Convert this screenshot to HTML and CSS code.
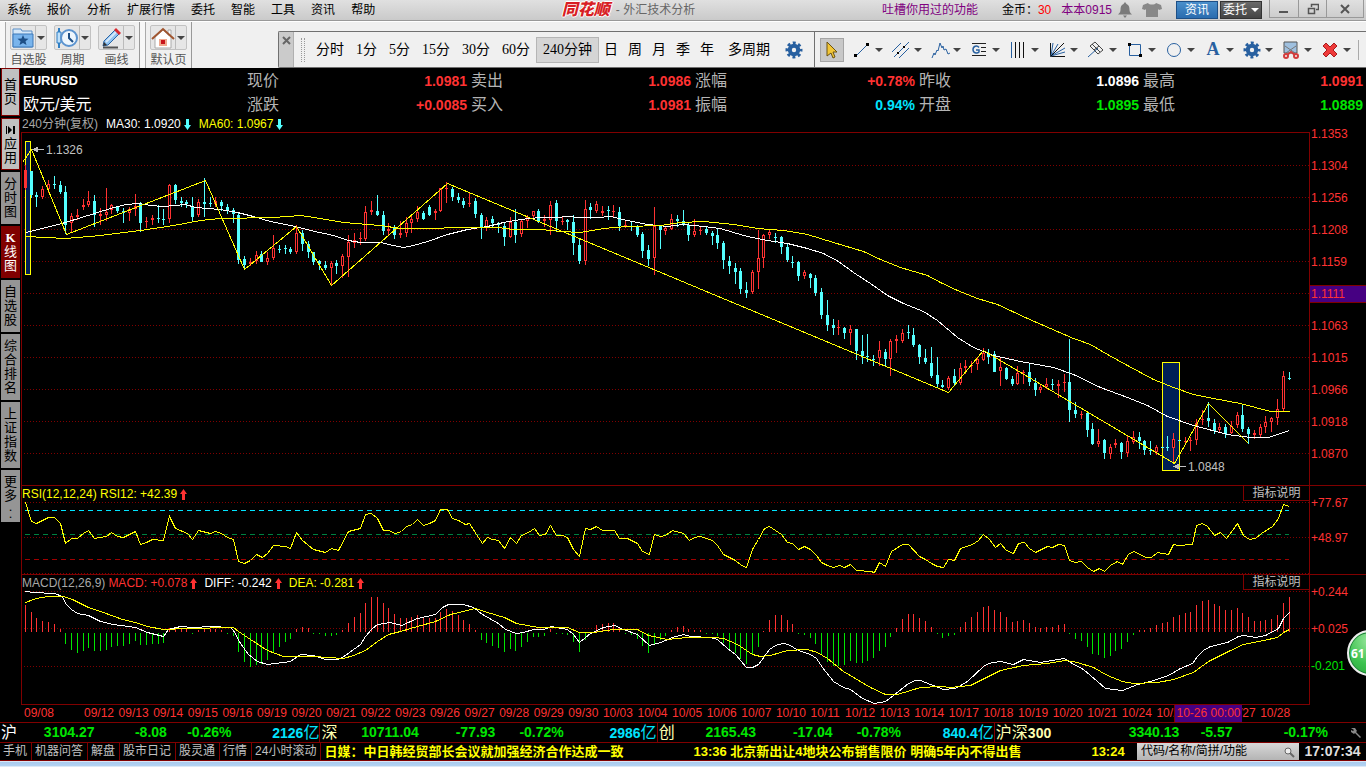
FILE: index.html
```html
<!DOCTYPE html>
<html lang="zh-CN">
<head>
  <meta charset="UTF-8" />
  <meta name="viewport" content="width=device-width, initial-scale=1.0"/>
  <title>同花顺 - 外汇技术分析</title>
  <link rel="stylesheet" href="styles.css">
</head>
<body>
  <header class="titlebar">
    <nav class="menu">
      <button>系统</button>
      <button>报价</button>
      <button>分析</button>
      <button>扩展行情</button>
      <button>委托</button>
      <button>智能</button>
      <button>工具</button>
      <button>资讯</button>
      <button>帮助</button>
    </nav>
    <h1 class="title"><span class="logo">同花顺</span> - 外汇技术分析</h1>
    <div class="account">
      <a href="#" class="feedback">吐槽你用过的功能</a>
      <span class="coins">金币：<b>30</b></span>
      <a href="#">本本0915</a>
      <svg class="bell" width="14" height="16" viewBox="0 0 14 16"><path d="M7 0l1.500 2c2.500 1 3 3 3 6 0 2 1 3 2.500 4.500H0C1.500 11 2.500 10 2.500 8c0-3 .5-5 3-6zM5 13.500h4L7 16z" fill="#7b7b7b"/></svg>
      <svg class="shirt" width="20" height="16" viewBox="0 0 20 16"><path d="M6 1c1 2 7 2 8 0l5 2 1 4-3 1-1-1v8H4V7L3 8 0 7l1-4z" fill="#888"/></svg>
    </div>
    <div class="quick">
      <button class="blue">资讯</button>
      <button class="dark">委托 <i class="arrow light"></i></button>
    </div>
    <div class="window-buttons">
      <button aria-label="最小化"><svg width="12" height="12" viewBox="0 0 12 12"><path d="M1 8h9v2H1z" fill="#555"/></svg></button>
      <button aria-label="还原"><svg width="12" height="12" viewBox="0 0 12 12"><path d="M4.500 4V1.500h7v5H9M1.500 5.500h6v5h-6z" fill="none" stroke="#555" stroke-width="1.500"/></svg></button>
      <button aria-label="关闭"><svg width="12" height="12" viewBox="0 0 12 12"><path d="M2 2l8 8M10 2l-8 8" stroke="#555" stroke-width="2"/></svg></button>
    </div>
  </header>

  <div class="toolbar">
    <div class="group">
      <div class="tool">
        <button aria-label="自选股">
          <svg width="24" height="22" viewBox="0 0 24 22"><path d="M2 4V2h8l1 2h10v16H2z" fill="#d6e8f8" stroke="#5b8fc7"/><path d="M2 7h20v13H2z" fill="#79b4ec" stroke="#3d79b8"/><path d="M12 8l1.500 3.500 4 .3-3 2.500 1 3.700-3.500-2-3.500 2 1-3.700-3-2.500 4-.3z" fill="#1d4f86"/></svg>
          <i class="arrow"></i>
        </button>
        <span>自选股</span>
      </div>
      <div class="tool">
        <button aria-label="周期">
          <svg width="24" height="22" viewBox="0 0 24 22"><path d="M4 1v20" stroke="#2f7fc4" stroke-width="2"/><path d="M2 5h4v11H2z" fill="#bfe0fa" stroke="#2f7fc4"/><circle cx="14" cy="11" r="8" fill="#eef6fd" stroke="#5b93cf" stroke-width="2"/><path d="M14 6v5l4 4" fill="none" stroke="#1d4f86" stroke-width="2"/></svg>
          <i class="arrow"></i>
        </button>
        <span>周期</span>
      </div>
      <div class="tool">
        <button aria-label="画线">
          <svg width="24" height="22" viewBox="0 0 24 22"><path d="M4 20.500h15" stroke="#555" stroke-width="2"/><path d="M4 19l1-5L16 3l4 4L9 18z" fill="#8fc2f0" stroke="#2b65a5"/><path d="M7 15L17 5" stroke="#d6e8f8" stroke-width="2"/><path d="M15 3l2-2 5 5-2 2z" fill="#d9272e"/><path d="M4 19l1-4 3 3z" fill="#333"/></svg>
          <i class="arrow"></i>
        </button>
        <span>画线</span>
      </div>
    </div>
    <div class="group">
      <div class="tool">
        <button aria-label="默认页">
          <svg width="24" height="22" viewBox="0 0 24 22"><path d="M17 3h3v5h-3zM4 10l8-7 8 7v11H4z" fill="#fff" stroke="#aaa"/><path d="M1 12L12 2l11 10" fill="none" stroke="#a0552f" stroke-width="2"/><path d="M8 12h8v7H8z" fill="#f0a98f"/><path d="M10 13h4v4h-4z" fill="#c8141b"/></svg>
          <i class="arrow"></i>
        </button>
        <span>默认页</span>
      </div>
    </div>

    <div class="dock">
      <button class="dock-close" aria-label="关闭工具条"><svg width="9" height="9" viewBox="0 0 9 9"><path d="M1 1l7 7M8 1L1 8" stroke="#666" stroke-width="2"/></svg></button>
      <div class="grip"></div>
      <div class="periods">
        <button>分时</button>
        <button>1分</button>
        <button>5分</button>
        <button>15分</button>
        <button>30分</button>
        <button>60分</button>
        <button class="active">240分钟</button>
        <button class="short">日</button>
        <button class="short">周</button>
        <button class="short">月</button>
        <button class="short">季</button>
        <button class="short">年</button>
        <button class="multi">多周期</button>
      </div>
      <button class="gear" aria-label="设置"><svg width="18" height="18"><use href="#icon-gear"/></svg></button>
      <div class="draw-tools">
        <button class="pointer" aria-label="选择"><svg width="12" height="18" viewBox="0 0 12 18"><path d="M1 1l10 10H7l2 5-2 1-2-5-4 3z" fill="#f2c637" stroke="#6b5312"/></svg></button>
        <button class="draw" aria-label="线段"><svg width="20" height="20" viewBox="0 0 20 20"><path d="M4 16L16 4" stroke="#2860a0"/><path d="M2 14h3v3H2zM14 3h3v3h-3z"/></svg><i class="arrow"></i></button>
        <button class="draw" aria-label="平行线"><svg width="20" height="20" viewBox="0 0 20 20"><path d="M1 12L10 3M3 17L18 2M8 18L18 8" stroke="#2860a0"/><path d="M6 12h2v2H6zM12 6h2v2h-2z"/></svg><i class="arrow"></i></button>
        <button class="draw" aria-label="波浪线"><svg width="20" height="20" viewBox="0 0 20 20"><path d="M2 18l2-5 1 2 2-5 1 1 2-8 2 5 1-2 1 4 2-1 2 5 2-1" fill="none" stroke="#2860a0"/></svg><i class="arrow"></i></button>
        <button class="draw" aria-label="黄金分割"><svg width="20" height="20" viewBox="0 0 20 20"><path d="M3 3.500h14M12 7.500h5M12 11.500h5M3 15.500h14" stroke="#222"/><path d="M10 7.500C8 5 4 6 4 9.500s4 4.500 6 2.500V10H7" fill="none" stroke="#2860a0" stroke-width="1.500"/></svg><i class="arrow"></i></button>
        <button class="draw" aria-label="周期线"><svg width="20" height="20" viewBox="0 0 20 20"><path d="M3.500 2v16" stroke="#2860a0"/><path d="M7.500 2v16M11.500 2v16M15.500 2v16" stroke="#111"/></svg><i class="arrow"></i></button>
        <button class="draw" aria-label="速阻线"><svg width="20" height="20" viewBox="0 0 20 20"><path d="M3.500 3v13.500H18" fill="none" stroke="#111"/><path d="M4 16L6 3M4 16L11 4M4 16L18 8M4 16l14-4" stroke="#2860a0"/><path d="M4 16L17 3" stroke="#111"/></svg><i class="arrow"></i></button>
        <button class="draw" aria-label="音叉线"><svg width="20" height="20" viewBox="0 0 20 20"><path d="M2 17L12 8" stroke="#2860a0"/><path d="M4 6l8 8M6 4l8 8M9 2l8 8M4 6l5-4M8 10l5-4M12 14l5-4" stroke="#444"/></svg><i class="arrow"></i></button>
        <button class="draw" aria-label="矩形"><svg width="20" height="20" viewBox="0 0 20 20"><path d="M4.500 4.500h11v11h-11z" fill="none" stroke="#2860a0"/><path d="M3 3h3v3H3zM14 14h3v3h-3z"/></svg><i class="arrow"></i></button>
        <button class="draw" aria-label="圆"><svg width="20" height="20" viewBox="0 0 20 20"><circle cx="10" cy="10" r="6.500" fill="none" stroke="#2860a0"/></svg><i class="arrow"></i></button>
        <button class="draw" aria-label="文字"><span class="letter">A</span><i class="arrow"></i></button>
        <button class="draw" aria-label="画线设置"><svg width="20" height="20" viewBox="-1 -1 20 20"><use href="#icon-gear" width="18" height="18"/></svg><i class="arrow"></i></button>
        <button class="draw" aria-label="截图"><svg width="20" height="20" viewBox="0 0 20 20"><path d="M3 2h13v11H3z" fill="#9fc0df" stroke="#555"/><path d="M4 6l10 7M15 6L5 13" stroke="#777"/><path d="M6 15l4-3 4 3" fill="none" stroke="#d33c3c" stroke-width="2"/><circle cx="5" cy="16" r="2" fill="none" stroke="#d33c3c" stroke-width="2"/><circle cx="15" cy="16" r="2" fill="none" stroke="#d33c3c" stroke-width="2"/></svg><i class="arrow"></i></button>
        <button class="draw" aria-label="删除画线"><svg width="20" height="20" viewBox="0 0 20 20"><path d="M3 6l3-3 4 4 4-4 3 3-4 4 4 4-3 3-4-4-4 4-3-3 4-4z" fill="#ee3a3a" stroke="#a81c1c"/></svg><i class="arrow"></i></button>
      </div>
    </div>
  </div>

  <div class="workspace">
    <nav class="sidebar">
      <button class="bright tall">首页</button>
      <button class="bright"><svg width="10" height="12" viewBox="0 0 10 12"><path d="M2 2l4 4-4 4zM7 2h2v8H7zM0 2h1v8H0z"/></svg>应用</button>
      <button>分时图</button>
      <button class="selected"><b>K</b>线图</button>
      <button>自选股</button>
      <button>综合排名</button>
      <button>上证指数</button>
      <button>更多<span class="dots">. .</span></button>
    </nav>

    <main class="content">
      <section class="quote">
        <div class="name"><b>EURUSD</b></div>
        <div>现价<b class="up">1.0981</b></div>
        <div>卖出<b class="up">1.0986</b></div>
        <div>涨幅<b class="up">+0.78%</b></div>
        <div>昨收<b class="flat">1.0896</b></div>
        <div>最高<b class="up">1.0991</b></div>
        <div class="name">欧元/美元</div>
        <div>涨跌<b class="up">+0.0085</b></div>
        <div>买入<b class="up">1.0981</b></div>
        <div>振幅<b class="cyan">0.94%</b></div>
        <div>开盘<b class="down">1.0895</b></div>
        <div>最低<b class="down">1.0889</b></div>
      </section>

      <div class="legend">
        <span class="muted">240分钟(复权)</span>
        <span class="white">MA30: 1.0920<svg class="mark" width="7" height="11"><use href="#icon-down"/></svg></span>
        <span class="yellow">MA60: 1.0967<svg class="mark" width="7" height="11"><use href="#icon-down"/></svg></span>
      </div>

      <section class="panel">
        <div class="plot">
          <svg id="price" class="chart price" viewBox="22 133 1287 352" preserveAspectRatio="none"></svg>
        </div>
        <ul class="axis price-axis">
          <li>1.1353</li>
          <li>1.1304</li>
          <li>1.1256</li>
          <li>1.1208</li>
          <li>1.1159</li>
          <li><span class="cursor">1.1111</span></li>
          <li>1.1063</li>
          <li>1.1015</li>
          <li>1.0966</li>
          <li>1.0918</li>
          <li>1.0870</li>
        </ul>
      </section>

      <section class="panel">
        <div class="plot">
          <div class="legend">
            <span class="yellow">RSI(12,12,24) RSI12: +42.39<svg class="mark" width="7" height="11"><use href="#icon-up"/></svg></span>
            <button class="help">指标说明</button>
          </div>
          <svg id="rsi" class="chart rsi" viewBox="22 502 1287 72" preserveAspectRatio="none"></svg>
        </div>
        <ul class="axis rsi-axis">
          <li>+77.67</li>
          <li>+48.97</li>
        </ul>
      </section>

      <section class="panel last">
        <div class="plot">
          <div class="legend">
            <span class="muted">MACD(12,26,9)</span>
            <span class="red">MACD: +0.078<svg class="mark" width="7" height="11"><use href="#icon-up"/></svg></span>
            <span class="white">DIFF: -0.242<svg class="mark" width="7" height="11"><use href="#icon-up"/></svg></span>
            <span class="yellow">DEA: -0.281<svg class="mark" width="7" height="11"><use href="#icon-up"/></svg></span>
            <button class="help">指标说明</button>
          </div>
          <svg id="macd" class="chart macd" viewBox="22 591 1287 113" preserveAspectRatio="none"></svg>
        </div>
        <ul class="axis macd-axis">
          <li>+0.244</li>
          <li>+0.025</li>
          <li class="down">-0.201</li>
        </ul>
        <button class="badge">61</button>
      </section>

      <div class="dates">
        <ol id="dates"></ol>
        <span class="cursor-date">10-26 00:00</span>
      </div>
    </main>
  </div>

  <section class="indices">
    <div class="index"><span>沪</span><b>3104.27</b><b>-8.08</b><b>-0.26%</b><b class="cyan">2126<i>亿</i></b></div>
    <div class="index"><span class="pale">深</span><b>10711.04</b><b>-77.93</b><b>-0.72%</b><b class="cyan">2986<i>亿</i></b></div>
    <div class="index"><span class="pale">创</span><b>2165.43</b><b>-17.04</b><b>-0.78%</b><b class="cyan">840.4<i>亿</i></b></div>
    <div class="index wide"><span class="pale">沪深<strong>300</strong></span><b>3340.13</b><b>-5.57</b><b>-0.17%</b></div>
    <button class="wrench" aria-label="设置"><svg width="12" height="12" viewBox="0 0 12 12"><path d="M1 1l4 0 2 3-1 1 5 5-1 1-5-5-1 1-3-2 0-2 2 1 1-1z" fill="#888"/></svg></button>
  </section>

  <footer class="status">
    <nav class="links">
      <a href="#">手机</a><a href="#">机器问答</a><a href="#">解盘</a><a href="#">股市日记</a><a href="#">股灵通</a><a href="#">行情</a><a href="#">24小时滚动</a>
    </nav>
    <div class="news">
      <span>日媒：中日韩经贸部长会议就加强经济合作达成一致</span>
      <span>13:36 北京新出让4地块公布销售限价 明确5年内不得出售</span>
      <span>13:24</span>
    </div>
    <div class="search">
      <input type="text" placeholder="代码/名称/简拼/功能" aria-label="代码/名称/简拼/功能">
      <svg width="12" height="12" viewBox="0 0 12 12"><circle cx="5" cy="5" r="3" fill="#eee" stroke="#666"/><path d="M7 7l4 4" stroke="#666" stroke-width="2"/></svg>
    </div>
    <time>17:07:34</time>
  </footer>
  <div class="desktop-edge"></div>

  <svg class="defs" width="0" height="0">
    <symbol id="icon-gear" viewBox="0 0 18 18">
      <circle cx="9" cy="9" r="7" fill="none" stroke="#2860a0" stroke-width="3" stroke-dasharray="2.900 2.600" stroke-dashoffset="1.450"/>
      <circle cx="9" cy="9" r="4.200" fill="none" stroke="#2860a0" stroke-width="4"/>
    </symbol>
    <symbol id="icon-down" viewBox="0 0 7 11"><path d="M2 0h3v6h2L3.500 11 0 6h2z" fill="#54ffff"/></symbol>
    <symbol id="icon-up" viewBox="0 0 7 11"><path d="M2 11h3V5h2L3.500 0 0 5h2z" fill="#ff3232"/></symbol>
  </svg>
  <script src="charts.js"></script>
</body>
</html>
```

FILE: styles.css
```css
* {
  box-sizing: border-box;
}

body {
  margin: 0;
  min-height: 100vh;
  background: #000;
  font-family: "Liberation Sans", "Noto Sans CJK SC", sans-serif;
  font-size: 12px;
  line-height: 16px;
  overflow-x: hidden;
}

button {
  margin: 0;
  padding: 0;
  border: none;
  background: none;
  color: inherit;
  font: inherit;
  cursor: pointer;
}

ul, ol {
  margin: 0;
  padding: 0;
  list-style: none;
}

a {
  color: inherit;
  text-decoration: none;
}

svg {
  display: block;
  flex: none;
}

.defs {
  position: absolute;
}

.arrow {
  border: 4px solid transparent;
  border-top-color: #444;
  border-bottom: none;
}

.arrow.light {
  border-top-color: #fff;
}

.up, .red { color: #ff3232; }
.down { color: #00e600; }
.cyan { color: #00e4ff; }
.flat, .white { color: #fff; }
.yellow { color: #ff0; }
.muted { color: #a8a8a8; }

/* title bar */
.titlebar {
  display: flex;
  align-items: center;
  height: 21px;
  background: linear-gradient(#e0e0e0, #cacaca);
  border-bottom: 1px solid #999;
  white-space: nowrap;
}

.menu {
  display: flex;
  gap: 16px;
  padding-left: 7px;
}

.title {
  display: flex;
  align-items: center;
  gap: 6px;
  margin: 0 auto;
  color: #666;
  font-size: 12px;
  font-weight: normal;
}

.logo {
  color: #d81e24;
  font-size: 16px;
  font-weight: 900;
  font-style: italic;
  text-shadow: 1px 0 #fff, -1px 0 #fff, 0 1px #fff, 0 -1px #fff;
}

.account {
  display: flex;
  align-items: center;
  color: #800080;
}

.coins {
  margin: 0 10px 0 24px;
  color: #000;
}

.coins b {
  color: #f00;
  font-weight: normal;
}

.bell {
  margin: 0 10px 0 6px;
}

.quick {
  display: flex;
  gap: 2px;
  margin: 0 7px 0 14px;
}

.quick button {
  display: flex;
  align-items: center;
  justify-content: center;
  gap: 4px;
  width: 42px;
  height: 18px;
  color: #fff;
}

.quick .blue {
  background: linear-gradient(#4a8fcb, #2a6caf);
  border: 1px solid #1d4f86;
}

.quick .dark {
  background: linear-gradient(#6a6a6a, #444);
  border: 1px solid #333;
}

.window-buttons {
  display: flex;
  align-self: flex-start;
  margin-right: 2px;
  border: 1px solid #999;
  border-top: none;
}

.window-buttons button {
  display: flex;
  align-items: center;
  justify-content: center;
  width: 28px;
  height: 17px;
}

.window-buttons button + button {
  border-left: 1px solid #999;
}

.window-buttons button:last-child {
  width: 37px;
}

/* toolbar */
.toolbar {
  display: flex;
  height: 47px;
  background: #f0f0f0;
  border-top: 1px solid #fff;
}

.group {
  display: flex;
  gap: 7px;
  padding: 3px 4px 0 10px;
  border-right: 1px solid #999;
  box-shadow: inset 5px 0 #f7f7f7, inset 6px 0 #aaa;
}

.tool {
  display: flex;
  flex-direction: column;
  align-items: center;
  color: #555;
}

.tool button {
  display: flex;
  align-items: center;
  gap: 2px;
  height: 25px;
  padding: 0 1px 0 0;
  background: linear-gradient(90deg, #e6e6e6 24px, #bbb 24px, #bbb 25px, #e6e6e6 25px);
  border: 1px solid #c2c2c2;
  border-radius: 2px;
}

.tool span {
  padding-top: 2px;
}

.dock {
  display: flex;
  flex: 1;
  margin: 9px 0 0 86px;
  border: 1px solid #707070;
  border-right: none;
  border-radius: 2px 0 0 2px;
  align-items: center;
}

.dock-close {
  align-self: stretch;
  display: flex;
  justify-content: center;
  width: 15px;
  padding-top: 4px;
  background: #cbcbcb;
  border-right: 1px solid #b0b0b0;
}

.grip {
  width: 4px;
  height: 24px;
  margin: 0 5px 0 7px;
  border: 1px dotted #999;
  border-width: 0 1px;
}

.periods {
  display: flex;
  font-family: "Liberation Serif", "Noto Sans CJK SC", serif;
  font-size: 14px;
}

.periods button {
  height: 26px;
  padding: 0 5px;
  border: 1px solid transparent;
  white-space: nowrap;
}

.periods .active {
  padding: 0 6px;
  background: #d5d5d5;
  border-color: #b5b5b5;
}

.periods .short {
  padding: 0 4px;
}

.periods .multi {
  padding: 0 8px;
}

.gear {
  margin: 0 11px 0 6px;
}

.draw-tools {
  display: flex;
  flex: 1;
  align-items: center;
  align-self: stretch;
  padding-left: 5px;
  border-left: 1px solid #707070;
}

.pointer {
  display: flex;
  align-items: center;
  justify-content: center;
  width: 24px;
  height: 24px;
  margin-right: 8px;
  background: #c8c8c8;
  border: 1px solid #a5a5a5;
}

.draw {
  display: flex;
  align-items: center;
  gap: 3px;
  width: 39px;
}

.draw:last-child {
  border-right: 1px solid #aaa;
}

.letter {
  width: 20px;
  color: #2860a0;
  font: bold 18px "Liberation Serif", serif;
}

/* left tabs */
.workspace {
  display: flex;
}

.sidebar {
  display: flex;
  flex-direction: column;
  gap: 2px;
  width: 21px;
  padding-left: 1px;
}

.sidebar button {
  width: 19px;
  padding: 5px 3px;
  background: #959595;
  color: #000;
  font-size: 13px;
  line-height: 14px;
  word-break: break-all;
}

.sidebar .bright {
  padding: 4px 2px;
  background: #c0c0c0;
  border: 1px solid #800000;
}

.sidebar .tall {
  padding: 9px 2px;
}

.sidebar .selected {
  background: #800000;
  color: #fff;
}

.sidebar b {
  display: block;
  font-family: "Liberation Serif", serif;
}

.sidebar svg {
  height: 14px;
  margin: 0 auto;
}

.dots {
  display: block;
  width: 4px;
  margin: 0 auto;
  line-height: 7px;
}

/* quote header */
.content {
  flex: 1;
  min-width: 0;
}

.quote {
  display: grid;
  grid-template-columns: repeat(6, 1fr);
  padding: 1px 0 0 1px;
  color: #b4b4b4;
  font-size: 16px;
  line-height: 24px;
}

.quote div {
  display: flex;
  justify-content: space-between;
  padding: 0 3px 0 1px;
}

.quote b {
  font-size: 14px;
}

.quote .name {
  color: #fff;
}

.quote .name b {
  font-size: 13px;
}

.legend {
  display: flex;
  gap: 8px;
  height: 15px;
  padding-left: 1px;
  line-height: 15px;
  white-space: nowrap;
}

.legend .mark {
  display: inline-block;
  margin-left: 3px;
  vertical-align: -2px;
}

/* charts */
.panel {
  display: flex;
  position: relative;
}

.plot {
  flex: 1;
  min-width: 0;
  border-top: 1px solid #800000;
  border-left: 1px solid #800000;
}

.plot .legend {
  gap: 3px;
  height: 16px;
  padding-left: 0;
  line-height: 17px;
}

.plot .white, .plot .white + .yellow {
  margin-left: 4px;
}

.last .plot {
  border-bottom: 1px solid #800000;
}

.help {
  width: 66px;
  height: 15px;
  margin-left: auto;
  border: 1px solid #800000;
  border-width: 0 0 1px 1px;
  color: #c0c0c0;
  line-height: 14px;
}

.chart {
  width: 100%;
  overflow: hidden;
  shape-rendering: crispEdges;
}

.price { height: 352px; }
.rsi { height: 72px; }
.macd { height: 113px; }

.grid-line {
  stroke: #800000;
  stroke-dasharray: 1 2;
}

.level {
  stroke-dasharray: 5 4;
}

.line {
  fill: none;
  stroke-width: 1;
}

.note {
  fill: #c0c0c0;
  font-size: 12px;
}

.axis {
  display: flex;
  flex-direction: column;
  width: 57px;
  border-top: 1px solid #800000;
  border-left: 1px solid #800000;
  color: #ff3232;
  line-height: 14px;
}

.axis li {
  padding-left: 1px;
}

.price-axis {
  border-top: none;
}

.price-axis li {
  display: flex;
  flex-direction: column;
  justify-content: center;
  height: 32px;
  padding: 0;
  text-indent: 1px;
}

.price-axis li:first-child {
  margin-top: -14px;
}

.cursor {
  height: 18px;
  background: #460082;
  border: 1px solid #800000;
  border-width: 1px 0;
  line-height: 16px;
}

.rsi-axis {
  gap: 21px;
  padding-top: 10px;
}

.macd-axis {
  gap: 23px;
  padding-top: 10px;
}

.axis .down {
  color: #00e600;
}

.badge {
  position: absolute;
  right: -27px;
  top: 56px;
  width: 46px;
  height: 46px;
  padding-left: 2px;
  border: 2px solid #eee;
  border-radius: 50%;
  background: radial-gradient(circle at 50% 20%, #9be8a0, #3cc24e 60%, #2da53e);
  box-shadow: inset 0 0 0 1px #1f7d3a;
  color: #fff;
  font: bold 12px "Noto Sans", sans-serif;
  text-align: left;
}

.dates {
  position: relative;
  height: 17px;
  color: #ff3232;
  line-height: 17px;
}

.dates ol {
  display: flex;
  padding: 0 71px 0 3px;
}

.dates li {
  flex: 1;
  min-width: 0;
  white-space: nowrap;
}

.dates li:first-child {
  flex: none;
  width: 60px;
}

.cursor-date {
  position: absolute;
  right: 124px;
  top: 0;
  width: 68px;
  height: 17px;
  background: #460082;
  border-left: 1px solid #800000;
  text-align: center;
  white-space: nowrap;
}

/* index strip */
.indices {
  display: flex;
  height: 20px;
  border-top: 1px solid #800000;
  color: #00e600;
  font-size: 14px;
  line-height: 19px;
}

.index {
  display: grid;
  grid-template-columns: 24px 73fr 75fr 67fr 91fr;
  flex: 20;
  border-right: 1px solid #800000;
  text-align: right;
  white-space: nowrap;
}

.index:first-child {
  flex: 19;
}

.index.wide {
  grid-template-columns: 60px 124fr 53fr 95fr;
  flex: none;
  width: 26%;
  padding-right: 22px;
  border: none;
}

.index span {
  padding-left: 1px;
  color: #fff;
  font-size: 16px;
  text-align: left;
}

.index .pale {
  color: #ffffb0;
}

.index strong {
  font-size: 14px;
}

.index i {
  font-size: 16px;
  font-style: normal;
  font-weight: normal;
}

.wrench {
  margin-right: 4px;
}

/* status bar */
.status {
  display: flex;
  height: 19px;
  border: 1px solid #800000;
  border-width: 1px 0;
  color: #c0c0c0;
  line-height: 17px;
  white-space: nowrap;
}

.links {
  display: flex;
}

.links a {
  padding: 0 4px 0 3px;
  border-right: 1px solid #800000;
}

.news {
  display: flex;
  flex: 1;
  gap: 70px;
  min-width: 0;
  padding-left: 3px;
  overflow: hidden;
  color: #ff0;
  font-size: 13px;
  font-weight: bold;
}

.search {
  display: flex;
  align-items: center;
  width: 162px;
  padding: 0 4px;
  background: linear-gradient(#d8d8d8, #b4b4b4);
}

.search input {
  flex: 1;
  min-width: 0;
  padding: 0;
  border: none;
  outline: none;
  background: none;
  font: inherit;
}

.search input::placeholder {
  color: #000;
}

.status time {
  width: 67px;
  color: #ddd;
  font-size: 14px;
  font-weight: bold;
  text-align: center;
}

.desktop-edge {
  height: 7px;
  background: linear-gradient(#d8e6f5 1px, #a9cbee 1px, #b4d3f2 5px, #dce9f7 5px, #dce9f7 6px, #33414f 6px);
}
```

FILE: charts.js
```js
const RED = '#ff3232';
const CYAN = '#54ffff';
const GREEN = '#00e600';
const YELLOW = '#ffff00';
const WHITE = '#ffffff';

// high, open/close top, open/close bottom, low (r = rising, c = falling)
const candles = `
r 165 170 188 190|c 171 171 195 198|c 192 195 197 207|r 186 189 197 199|r 180 184 189 193|c 176 184 185 189|c 181 185 192 194|c 186 192 225 234
r 213 216 223 232|r 209 215 217 220|r 199 205 207 210|r 191 201 205 207|c 195 201 215 227|r 208 214 216 225|r 188 212 215 221|r 204 205 210 214
c 206 206 211 213|c 208 211 213 223|r 207 209 213 221|r 194 206 209 216|c 202 204 223 232|r 217 221 222 228|r 215 218 220 225|c 205 218 219 223
c 209 219 220 225|r 184 185 219 223|c 184 185 200 204|c 197 201 203 207|c 200 202 204 208|c 197 206 217 221|r 199 202 215 217|c 178 202 204 217
c 197 203 204 207|r 197 201 204 207|c 200 202 206 211|c 204 207 211 214|c 208 210 214 223|c 213 215 260 264|c 256 259 265 269|r 258 262 264 266
r 251 255 261 264|c 251 254 262 262|r 252 258 262 265|r 235 248 258 260|c 245 249 250 253|c 245 248 249 254|c 247 249 252 254|r 225 233 252 254
c 230 233 244 251|c 241 244 252 258|c 252 252 262 265|c 260 261 264 270|c 261 265 268 270|r 261 263 268 285|c 260 263 266 274|r 254 256 266 278
r 235 242 257 277|r 233 240 243 248|r 232 238 239 245|r 206 212 239 241|r 201 210 212 215|c 195 211 215 216|c 211 215 231 235|r 223 229 231 235
c 225 227 235 239|r 221 233 235 238|r 217 223 233 237|r 214 219 223 233|r 206 212 219 222|c 211 213 219 220|c 205 207 215 216|r 209 211 213 220
r 188 188 211 212|r 182 188 189 203|c 187 189 197 201|c 193 197 200 203|c 198 201 205 208|r 193 203 204 207|c 198 201 214 218|c 213 215 227 239
r 217 220 227 231|c 216 219 223 227|c 222 224 225 233|c 223 226 237 246|r 217 222 237 238|c 209 222 235 243|r 219 221 234 237|r 215 217 221 228
r 211 211 216 220|c 209 211 221 223|r 215 219 221 227|r 201 205 220 235|c 200 203 221 232|r 217 221 222 225|c 219 220 222 230|c 215 222 243 255
c 238 245 261 264|r 200 209 261 265|c 203 207 210 219|r 201 204 211 213|r 206 211 213 216|c 206 210 211 220|r 205 211 212 217|c 207 212 226 231
r 220 225 226 228|c 221 226 227 231|c 225 227 235 237|c 232 234 251 258|c 245 250 259 266|r 207 226 258 275|c 225 226 230 249|r 226 228 231 235
r 214 219 229 230|c 215 219 221 227|c 210 221 225 226|c 222 225 235 241|r 219 231 235 237|r 226 230 231 235|c 227 229 233 235|c 231 233 236 245
c 228 235 243 249|c 241 243 260 269|c 256 261 266 274|c 263 268 272 284|c 268 271 289 294|c 282 290 293 298|r 270 272 292 294|r 230 258 272 289
r 234 235 258 268|r 229 232 235 239|c 233 237 238 243|c 236 237 247 254|c 243 247 260 262|c 256 262 263 268|c 261 262 276 281|r 270 272 276 279
c 273 274 278 288|c 275 278 293 296|c 288 292 315 319|c 300 315 325 331|c 319 325 328 335|r 320 327 328 335|c 327 328 333 339|r 325 329 333 345
c 329 329 351 360|c 335 351 356 364|c 334 356 357 362|c 355 359 360 366|r 341 350 358 366|c 349 352 359 366|r 339 341 359 376|r 335 339 341 353
r 329 333 341 343|c 325 332 333 339|c 328 335 345 347|c 344 345 357 364|c 349 358 362 364|c 347 363 376 378|c 357 375 384 388|c 380 385 387 388
r 376 378 388 390|c 369 376 383 386|r 363 368 383 385|r 360 366 368 374|r 361 365 366 373|r 357 359 364 370|r 348 353 360 361|c 349 353 357 364
c 351 354 372 372|r 357 367 371 386|c 367 368 379 380|c 376 379 384 386|r 366 373 384 385|r 370 372 373 384|c 363 372 382 386|c 378 383 390 396
r 384 387 390 393|r 378 384 387 389|c 379 384 385 390|r 380 384 386 398|r 374 382 383 392|c 339 382 410 422|c 402 410 414 418|r 411 414 415 419
c 412 413 430 437|c 423 429 444 445|r 429 441 444 447|c 439 440 453 459|r 444 447 454 459|r 439 443 445 448|c 442 443 452 459|r 436 441 453 457
r 431 437 442 444|c 432 437 441 449|c 440 441 450 455|c 441 450 451 455|r 445 447 452 455|c 447 447 448 448|c 436 447 448 451|r 433 439 448 464
c 440 440 441 441|r 437 441 442 445|r 437 440 441 451|r 419 423 440 445|r 410 419 420 425|c 402 418 421 427|c 419 423 431 434|r 423 427 430 433
c 424 427 434 438|r 421 426 433 434|r 412 415 425 428|c 405 415 429 432|c 427 429 434 444|r 430 433 435 439|r 424 427 435 437|r 416 422 427 433
r 417 418 422 432|r 399 409 418 425|r 371 376 409 411|c 372 378 379 380`.trim().split(/[|\n]/);

const histogram = [
  27, 20, 14, 11, 10, 8, 3, -11, -17, -20, -18, -15, -18, -18, -17, -14, -13, -13, -11, -8,
  -12, -12, -11, -11, -10, 4, 4, 4, 3, -1, 2, 3, 3, 3, 2, -1, -3, -19, -29, -34,
  -32, -31, -27, -19, -14, -9, -6, 3, 5, 4, -1, -1, -3, -3, -2, 2, 9, 15, 19, 29,
  35, 35, 29, 24, 18, 14, 14, 15, 17, 15, 14, 14, 20, 23, 21, 17, 12, 8, 2, -7,
  -10, -13, -15, -19, -16, -18, -14, -9, -4, -4, -3, 3, -1, -1, -2, -9, -19, -7, -1, 7,
  8, 9, 9, 4, -1, -2, -6, -13, -20, -12, -7, -3, 2, 5, 6, 3, 2, 2, -1, -1,
  -3, -10, -16, -20, -26, -31, -22, -14, 1, 12, 17, 17, 12, 8, -1, -2, -5, -11, -21, -29,
  -33, -33, -32, -28, -30, -30, -28, -25, -18, -14, -4, 4, 13, 18, 18, 14, 11, 5, -1, -5,
  -3, -2, 5, 10, 15, 20, 25, 26, 22, 20, 15, 10, 11, 12, 9, 5, 4, 5, 5, 7,
  8, -1, -6, -8, -14, -21, -22, -25, -23, -18, -16, -9, -2, 2, 2, 4, 7, 9, 10, 15,
  17, 19, 20, 27, 31, 32, 28, 26, 22, 22, 24, 19, 15, 11, 11, 12, 13, 17, 29, 35
];

const ma30 = '26,232 65,222 110,208 125,204 138,203 150,205 163,206 185,204 195,207 220,209 237,212 253,216 270,221 295,226 310,230 333,235 348,240 360,242 380,242 393,245 403,247 413,245 427,241 447,234 467,229 487,226 503,222 520,219 540,217 557,217 567,216 580,217 597,217 610,216 627,220 647,224 667,226 683,224 703,226 720,228 733,232 747,236 767,240 787,243 807,248 823,253 838,261 853,272 870,283 887,295 903,303 923,311 937,320 957,337 973,347 993,355 1020,361 1053,367 1073,374 1100,387 1127,397 1147,405 1167,416 1193,425 1227,434 1250,437 1268,437 1289,430';
const ma60 = '26,236 65,238 100,235 140,230 173,225 200,220 220,218 273,217 300,215 320,218 343,222 380,225 400,228 440,228 447,227 497,227 513,229 540,229 560,231 580,232 603,228 627,226 660,225 680,222 703,221 733,224 757,228 783,230 807,234 833,242 863,251 880,259 900,267 927,275 940,282 957,290 977,298 997,304 1027,318 1073,338 1090,344 1107,354 1127,365 1153,379 1173,387 1193,394 1213,398 1240,403 1270,411 1289,411';
const zigzag = '22,162 31,149 66,234 205,180 244,269 296,226 331,285 447,183 948,392 983,350 1174,463 1208,403';
const lastLeg = '1208,403 1248,443';

const rsi = '25,502 31,521 36,523 42,520 48,517 54,517 60,523 65,543 71,538 77,538 83,533 88,530 94,538 100,537 106,536 111,532 117,536 123,537 135,531 140,544 146,542 152,539 163,540 169,516 175,528 187,533 192,539 198,530 210,533 215,531 221,533 227,537 233,539 238,561 244,563 250,560 256,554 262,557 267,553 273,545 285,546 290,548 296,532 302,540 313,549 325,552 331,548 338,550 348,531 360,528 365,514 371,513 377,518 383,530 388,530 395,533 401,531 406,526 412,524 417,519 423,525 429,523 435,520 440,509 447,509 452,518 458,520 465,524 469,523 476,534 482,543 487,537 492,539 498,540 504,548 510,537 516,543 521,535 528,532 534,528 539,535 545,534 550,525 556,535 562,535 567,537 573,549 579,556 585,528 590,529 596,526 602,530 614,530 619,538 627,538 637,543 642,551 649,554 654,534 660,536 665,535 672,530 683,533 689,540 694,537 700,536 712,540 717,545 723,554 735,560 741,565 746,567 752,549 758,539 764,528 769,526 781,534 787,542 792,543 798,549 804,546 810,549 816,555 821,562 827,565 833,567 839,565 844,567 850,564 856,570 870,571 874,572 879,562 885,566 891,551 902,544 908,544 919,556 925,559 931,563 937,566 943,567 948,559 954,560 960,548 966,546 972,544 978,540 983,534 989,539 995,547 1000,543 1006,550 1013,553 1018,543 1024,542 1029,548 1035,552 1047,546 1052,547 1058,544 1064,545 1069,560 1075,562 1081,561 1087,567 1093,571 1099,568 1104,571 1110,565 1117,561 1122,564 1128,554 1133,551 1140,554 1145,557 1151,557 1157,552 1168,554 1173,544 1178,545 1192,544 1196,525 1202,523 1207,526 1214,535 1220,532 1226,538 1232,530 1237,523 1243,535 1249,539 1255,538 1261,533 1272,526 1278,518 1283,504 1289,506';

const diff = '25,591 33,592 54,593 62,596 65,603 71,609 77,613 88,615 100,621 113,624 135,627 147,632 163,636 168,629 180,626 193,627 210,626 230,627 233,630 240,643 248,654 257,661 267,664 290,661 300,654 313,655 325,659 338,659 345,655 360,644 365,636 371,629 377,624 390,622 401,625 417,618 435,614 442,607 448,604 463,604 473,607 482,614 498,623 505,629 516,633 523,632 533,629 543,629 551,626 567,629 573,634 579,642 590,633 603,627 614,625 623,629 637,634 649,645 660,642 672,637 683,634 690,636 710,637 717,639 727,648 735,654 746,667 752,667 758,664 769,649 775,645 782,643 788,644 798,650 810,654 816,658 822,667 833,681 843,687 850,689 862,698 874,703 885,701 893,695 908,683 915,680 920,680 925,682 943,689 955,688 967,681 983,666 988,663 1000,661 1013,664 1023,659 1040,662 1064,658 1070,662 1083,669 1097,681 1105,688 1122,690 1137,684 1150,681 1168,675 1180,668 1192,663 1197,656 1203,650 1210,646 1227,642 1238,636 1243,635 1255,637 1265,635 1278,628 1283,618 1289,612';
const dea = '25,602 36,598 48,596 63,596 72,599 88,607 103,612 122,619 135,622 147,626 163,629 187,628 233,627 238,631 250,639 267,650 283,656 313,656 343,658 353,655 365,650 377,641 388,634 400,631 417,626 435,621 450,614 475,608 487,612 504,617 516,623 538,627 567,627 579,632 593,632 613,629 637,629 648,635 667,639 687,637 713,637 723,638 737,644 752,654 760,656 770,655 787,650 807,649 817,652 827,658 843,671 870,687 885,694 897,694 920,687 940,686 950,687 970,685 1000,670 1023,665 1047,663 1065,660 1077,662 1093,667 1107,675 1122,681 1133,683 1157,682 1173,679 1193,672 1208,661 1228,651 1243,644 1263,640 1277,637 1283,632 1289,629';

// the empty slot is the day under the cursor label
const days = ['09/08', '09/12', '09/13', '09/14', '09/15', '09/16', '09/19', '09/20', '09/21',
  '09/22', '09/23', '09/26', '09/27', '09/28', '09/29', '09/30', '10/03', '10/04', '10/05',
  '10/06', '10/07', '10/10', '10/11', '10/12', '10/13', '10/14', '10/17', '10/18', '10/19',
  '10/20', '10/21', '10/24', '10/25', '', '10/27', '10/28'];

function xAt(i) {
  return Math.floor(25.4 + 5.77 * i);
}

function gridLine(y) {
  return `<path class="grid-line" d="M24 ${y}.5H1309"/>`;
}

function level(y, color) {
  return `<path class="level" stroke="${color}" d="M25 ${y}.5H1289"/>`;
}

function line(points, color) {
  return `<polyline class="line" transform="translate(0.5 0.5)" stroke="${color}" points="${points}"/>`;
}

function box(x, y, w, h) {
  return `M${x} ${y}h${w}v${h}h${-w}z`;
}

function drawPrice() {
  let red = '';
  let cyan = '';
  let hollow = '';
  candles.forEach((row, i) => {
    const [dir, ...rest] = row.split(' ');
    const [high, top, bottom, low] = rest.map(Number);
    const x = xAt(i);
    const shape = box(x, high, 1, low - high) + box(x - 1, top, 3, bottom - top);
    if (dir === 'r') {
      red += shape;
      if (i > 0 && bottom - top > 2) hollow += box(x, top + 1, 1, bottom - top - 2);
    } else {
      cyan += shape;
    }
  });

  let html = '';
  for (let y = 165; y < 484; y += 32) html += gridLine(y);
  html += '<path d="M25.5 141.5h5v133h-5zM1162.5 362.5h17v108h-17z" fill="#001f56" stroke="#ffff00"/>';
  html += `<path fill="${RED}" fill-rule="nonzero" d="${red}"/>`;
  html += `<path fill="#000" d="${hollow}"/>`;
  html += `<path fill="${CYAN}" d="${cyan}"/>`;
  html += line(ma30, WHITE) + line(ma60, YELLOW) + line(zigzag, YELLOW) + line(lastLeg, YELLOW);
  html += '<path d="M33 149.500h11M33 149.500l4-2v4zM1174 466.500h12M1174 466.500l4-2v4z" stroke="#c0c0c0" fill="#c0c0c0"/>';
  html += '<text class="note" x="46" y="154">1.1326</text><text class="note" x="1188" y="471">1.0848</text>';
  document.getElementById('price').innerHTML = html;
}

function drawRsi() {
  document.getElementById('rsi').innerHTML =
    gridLine(502) + gridLine(537) + gridLine(573) +
    level(510, '#00e4ff') + level(534, '#008040') + level(559, '#a00000') +
    line(rsi, YELLOW);
}

function drawMacd() {
  let red = '';
  let green = '';
  histogram.forEach((v, i) => {
    if (v > 0) red += box(xAt(i), 632 - v, 1, v);
    else green += box(xAt(i), 633, 1, -v);
  });
  document.getElementById('macd').innerHTML =
    gridLine(591) + gridLine(628) + gridLine(666) +
    `<path fill="${RED}" d="${red}"/><path fill="${GREEN}" d="${green}"/>` +
    line(diff, WHITE) + line(dea, YELLOW);
}

drawPrice();
drawRsi();
drawMacd();
document.getElementById('dates').innerHTML = days.map(d => `<li>${d}</li>`).join('');
```
